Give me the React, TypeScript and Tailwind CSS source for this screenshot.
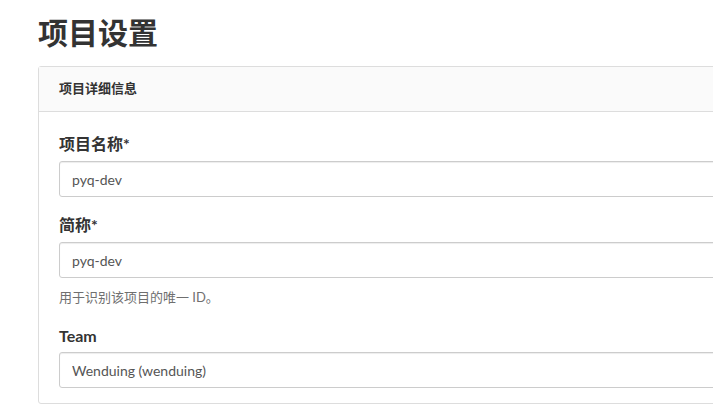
import React from "react";

const font = { fontFamily: 'Lato, "Noto Sans CJK SC", sans-serif' };

function Field({ label, value }: { label: string; value: string }) {
  return (
    <input
      readOnly
      value={value}
      className="block w-full h-[36px] px-[12px] border border-[#ccc] rounded-[3px] bg-white text-[14px] text-[#555] shadow-[inset_0_1px_1px_rgba(0,0,0,0.075)] outline-none"
      style={font}
      aria-label={label}
    />
  );
}

export default function App() {
  return (
    <div className="w-[713px] h-[408px] overflow-hidden bg-white" style={font}>
      <div className="pl-[38px]">
        <h1 className="pt-[11px] text-[30px] leading-[43px] font-bold text-[#333]">项目设置</h1>
        <div className="mt-[12px] w-[760px] border border-[#ddd] rounded-[3px]">
          <div className="h-[45px] px-[20px] flex items-center bg-[#fafafa] border-b border-[#ddd] text-[13px] font-bold text-[#333]">
            项目详细信息
          </div>
          <div className="px-[20px] pt-[20px] pb-[15px]">
            <div className="text-[16px] leading-[24px] font-bold text-[#333] mb-[5px]">项目名称*</div>
            <Field label="项目名称" value="pyq-dev" />
            <div className="mt-[16px] text-[16px] leading-[24px] font-bold text-[#333] mb-[5px]">简称*</div>
            <Field label="简称" value="pyq-dev" />
            <div className="mt-[9px] text-[13px] leading-[20px] text-[#6f6f6f]">用于识别该项目的唯一 ID。</div>
            <div className="mt-[17px] text-[16px] leading-[24px] font-bold text-[#333] mb-[4px]">Team</div>
            <Field label="Team" value="Wenduing (wenduing)" />
          </div>
        </div>
      </div>
    </div>
  );
}
